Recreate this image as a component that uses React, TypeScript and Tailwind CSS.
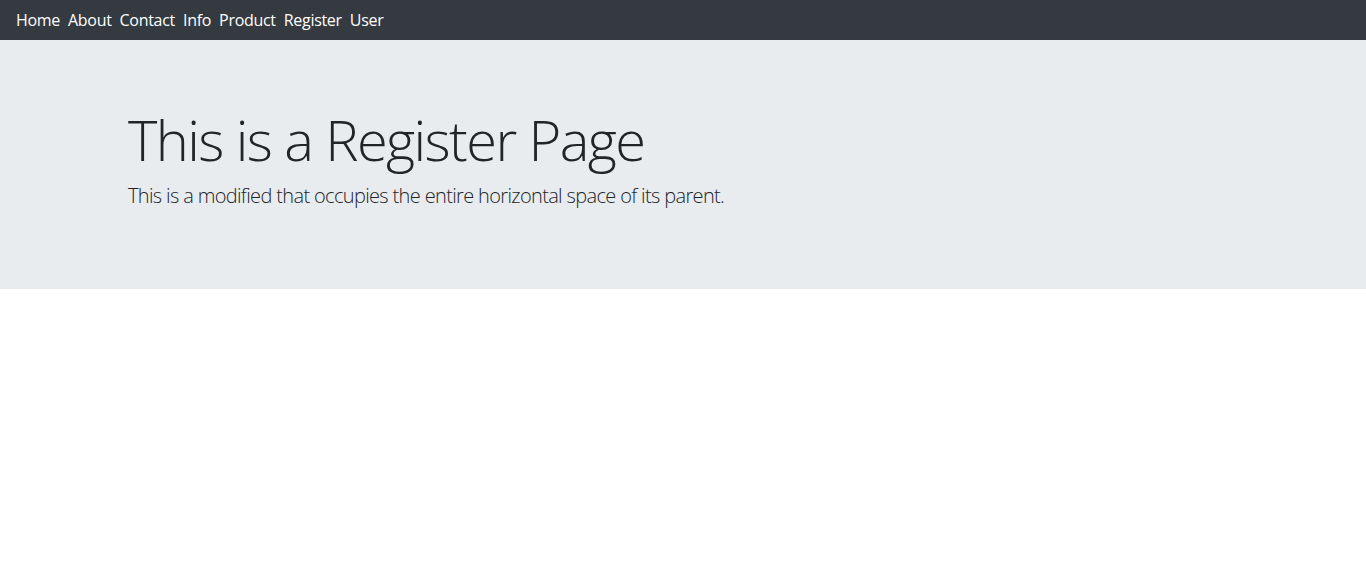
import React from 'react';

const links = ['Home', 'About', 'Contact', 'Info', 'Product', 'Register', 'User'];

export default function App() {
    return (
        <div className="min-h-screen bg-white text-[#212529]" style={{ fontFamily: '"Open Sans", "Noto Sans", sans-serif' }}>
            <nav className="h-10 bg-[#343a40] flex items-center px-4 gap-2">
                {links.map((l) => (
                    <a key={l} href="#" className="text-white text-base leading-6 tracking-[-0.3px]">
                        {l}
                    </a>
                ))}
            </nav>
            <div className="bg-[#e9ecef] pt-[66px] pb-[62px] mb-8">
                <div className="max-w-[1140px] mx-auto px-[15px]">
                    <h1 className="text-[56px] leading-[1.2] font-light tracking-[-1.6px] mb-2">This is a Register Page</h1>
                    <p className="text-xl leading-[1.5] font-light tracking-[-0.65px] mb-4">
                        This is a modified that occupies the entire horizontal space of its parent.
                    </p>
                </div>
            </div>
        </div>
    );
}
